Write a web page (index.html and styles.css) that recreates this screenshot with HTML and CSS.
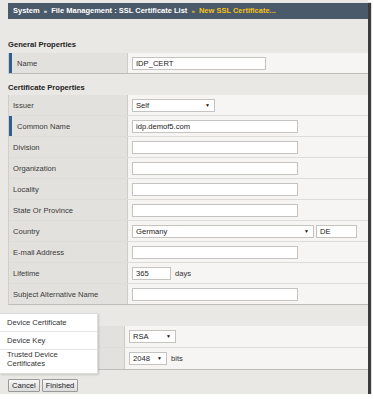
FILE: index.html
```html
<!DOCTYPE html>
<html lang="en">
<head>
    <meta charset="UTF-8">
    <meta name="viewport" content="width=device-width, initial-scale=1.0">
    <title>New SSL Certificate</title>
    <link rel="stylesheet" href="styles.css">
</head>
<body>
    <div class="page">
        <div class="topbar">
            System <span class="sep">&raquo;</span> File Management : SSL Certificate List <span class="sep cur">&raquo;</span> <span class="cur">New SSL Certificate...</span>
        </div>

        <div class="section-title first">General Properties</div>
        <div class="table">
            <div class="row">
                <div class="label required">Name</div>
                <div class="value"><input class="field medium" type="text" value="IDP_CERT"></div>
            </div>
        </div>

        <div class="section-title">Certificate Properties</div>
        <div class="table">
            <div class="row">
                <div class="label">Issuer</div>
                <div class="value"><span class="select w-issuer">Self<span class="arrow">&#9660;</span></span></div>
            </div>
            <div class="row">
                <div class="label required">Common Name</div>
                <div class="value"><input class="field" type="text" value="idp.demof5.com"></div>
            </div>
            <div class="row">
                <div class="label">Division</div>
                <div class="value"><input class="field" type="text"></div>
            </div>
            <div class="row">
                <div class="label">Organization</div>
                <div class="value"><input class="field" type="text"></div>
            </div>
            <div class="row">
                <div class="label">Locality</div>
                <div class="value"><input class="field" type="text"></div>
            </div>
            <div class="row">
                <div class="label">State Or Province</div>
                <div class="value"><input class="field" type="text"></div>
            </div>
            <div class="row">
                <div class="label">Country</div>
                <div class="value">
                    <span class="select w-country">Germany<span class="arrow">&#9660;</span></span>
                    <input class="field short" type="text" value="DE">
                </div>
            </div>
            <div class="row">
                <div class="label">E-mail Address</div>
                <div class="value"><input class="field" type="text"></div>
            </div>
            <div class="row">
                <div class="label">Lifetime</div>
                <div class="value"><input class="field tiny" type="text" value="365"><span class="unit">days</span></div>
            </div>
            <div class="row">
                <div class="label">Subject Alternative Name</div>
                <div class="value"><input class="field" type="text"></div>
            </div>
        </div>

        <!-- key section: its headings are hidden under the menu -->
        <div class="section-title band"></div>
        <div class="table lower">
            <div class="row">
                <div class="label"></div>
                <div class="value"><span class="select w-rsa">RSA<span class="arrow">&#9660;</span></span></div>
            </div>
            <div class="row">
                <div class="label"></div>
                <div class="value"><span class="select w-size">2048<span class="arrow">&#9660;</span></span><span class="unit">bits</span></div>
            </div>
        </div>

        <div class="buttons">
            <button class="btn">Cancel</button>
            <button class="btn">Finished</button>
        </div>

        <ul class="menu">
            <li>Device Certificate</li>
            <li>Device Key</li>
            <li class="tall">Trusted Device Certificates</li>
        </ul>
    </div>
</body>
</html>
```

FILE: styles.css
```css
body {
    margin: 0;
    background: #ffffff;
    font-family: "Liberation Sans", Arial, sans-serif;
    font-size: 7.6px;
    color: #333333;
}
.page {
    position: relative;
    width: 368px;
    height: 394px;
    background: #e9e8e4;
    box-shadow: 3px 3px 1px #3c3c3c;
    overflow: hidden;
}
.topbar {
    margin: 3px 0 0 8px;
    height: 16px;
    line-height: 16px;
    padding-left: 5px;
    background: #4b5a6a;
    color: #ffffff;
    font-weight: bold;
    font-size: 7.5px;
    white-space: nowrap;
}
.topbar .sep {
    font-size: 6px;
    margin: 0 2px;
}
.topbar .cur {
    color: #f3c31a;
}
.section-title {
    height: 21px;
    padding: 7px 0 0 8px;
    box-sizing: border-box;
    line-height: 14px;
    font-weight: bold;
    color: #222222;
}
.section-title.first {
    margin-top: 13px;
    padding-top: 6px;
}
.section-title.band {
    padding-top: 4px;
}
.table {
    margin-left: 8px;
    border-left: 1px solid #cfcec9;
    border-bottom: 1px solid #bdbcb8;
}
.row {
    display: grid;
    grid-template-columns: 119px 1fr;
    height: 21px;
    box-sizing: border-box;
    border-bottom: 1px solid #dddcd8;
}
.row:last-child {
    border-bottom: none;
    height: 20px;
}
.table.lower .row {
    grid-template-columns: 116px 1fr;
    height: 22px;
}
.table.lower .row:last-child {
    height: 21px;
}
.label {
    display: flex;
    align-items: center;
    padding-left: 4px;
    background: #e2e1dd;
    border-right: 1px solid #cdccc8;
    color: #3a3a3a;
    white-space: nowrap;
}
.label.required {
    border-left: 3px solid #2f5f90;
    padding-left: 5px;
}
.value {
    display: flex;
    align-items: center;
    gap: 2px;
    padding-left: 4px;
    background: #f6f5f3;
}
.field {
    width: 166px;
    height: 13px;
    box-sizing: border-box;
    padding: 0 3px;
    border: 1px solid #c4c3c0;
    background: #ffffff;
    font-family: inherit;
    font-size: 7.6px;
    color: #222222;
    outline: none;
}
.field.medium {
    width: 134px;
}
.field.short {
    width: 41px;
}
.field.tiny {
    width: 39px;
}
.unit {
    margin-left: 2px;
    color: #333333;
}
.select {
    position: relative;
    display: inline-block;
    height: 13px;
    line-height: 11px;
    box-sizing: border-box;
    padding-left: 3px;
    border: 1px solid #c4c3c0;
    background: #ffffff;
    color: #222222;
}
.select .arrow {
    position: absolute;
    right: 4px;
    top: 0;
    font-size: 5px;
    color: #111111;
}
.w-issuer { width: 83px; }
.w-country { width: 182px; }
.w-rsa { width: 47px; }
.w-size { width: 38px; }
.buttons {
    display: flex;
    gap: 2px;
    margin: 9px 0 0 8px;
}
.btn {
    height: 13px;
    padding: 0 3px;
    border: 1px solid #9a9a9a;
    border-radius: 1px;
    background: linear-gradient(#f7f7f7, #dcdcdc);
    font-family: inherit;
    font-size: 7.6px;
    color: #222222;
    line-height: 11px;
}
.menu {
    position: absolute;
    left: 0;
    top: 313px;
    width: 98px;
    margin: 0;
    padding: 0;
    list-style: none;
    background: #ffffff;
    border: 1px solid #dcdcdc;
    border-left: none;
    box-sizing: border-box;
    box-shadow: 1px 1px 2px rgba(0, 0, 0, 0.15);
}
.menu li {
    height: 17px;
    line-height: 17px;
    padding-left: 7px;
    border-bottom: 1px solid #e6e6e6;
    color: #333333;
}
.menu li.tall {
    height: 23px;
    line-height: 9px;
    padding-top: 0;
    padding-right: 30px;
    border-bottom: none;
}
```
